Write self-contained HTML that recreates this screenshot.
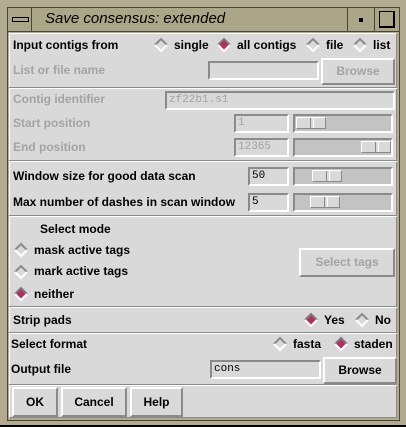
<!DOCTYPE html>
<html><head><style>
*{margin:0;padding:0;box-sizing:border-box}
body{width:406px;height:427px;overflow:hidden;background:#000;font-family:"Liberation Sans",sans-serif;font-weight:bold;font-size:12px;color:#000;position:relative}
.a{position:absolute}
.t{position:absolute;white-space:nowrap;line-height:14px}
.g{color:#a3a3a3}
.sep{position:absolute;left:9px;width:388px;height:2px;border-top:1px solid #8a8a8a;border-bottom:1px solid #fff}
.ent{position:absolute;background:#d9d9d9;border:2px solid;border-color:#8a8a8a #fff #fff #8a8a8a;font-family:"Liberation Mono",monospace;font-weight:normal;font-size:11px;padding-left:2px;line-height:14px}
.btn{position:absolute;background:#d9d9d9;border:2px solid;border-color:#fff #8a8a8a #8a8a8a #fff;text-align:center}
.tr{position:absolute;background:#c3c3c3;border:2px solid;border-color:#8a8a8a #fff #fff #8a8a8a}
.sl{position:absolute;top:1px;height:12px;width:30px;background:#d9d9d9;border:1px solid;border-color:#fff #8a8a8a #8a8a8a #fff}
.sl:after{content:"";position:absolute;left:13px;top:0;width:2px;height:10px;border-left:1px solid #8a8a8a;border-right:1px solid #fff}
</style></head><body>
<div class="a" style="left:0;top:0;width:406px;height:425px;background:#b2ab91"></div>
<div class="a" style="left:7px;top:7px;width:393px;height:414px;border:1px solid #4a4636"></div>
<div class="a" style="left:8px;top:8px;width:391px;height:24px;background:#aca689;border-bottom:1px solid #4a4636"></div>
<div class="a" style="left:31px;top:8px;width:1px;height:24px;background:#4a4636"></div>
<div class="a" style="left:347px;top:8px;width:1px;height:24px;background:#4a4636"></div>
<div class="a" style="left:374px;top:8px;width:1px;height:24px;background:#4a4636"></div>
<div class="a" style="left:12px;top:17px;width:17px;height:5px;border:1px solid #000;background:#aca689"></div>
<div class="a" style="left:359px;top:18px;width:4px;height:4px;background:#000"></div>
<div class="a" style="left:379px;top:11px;width:16px;height:17px;border:1px solid #000;border-right-width:2px;border-bottom-width:2px"></div>
<div class="t" style="left:45px;top:11px;font-weight:normal;font-style:italic;font-size:15px;line-height:16px">Save consensus: extended</div>
<div class="a" style="left:9px;top:33px;width:388px;height:385px;background:#d9d9d9;border:1px solid;border-color:#fff #8a8a8a #8a8a8a #fff"></div>

<svg class="a" style="left:0;top:0" width="406" height="427">
<defs>
<g id="u"><polygon points="0,6 6,0 12,6 6,12" fill="#d9d9d9"/><polyline points="0,6 6,0 12,6" fill="none" stroke="#8a8a8a" stroke-width="2"/><polyline points="0,6 6,12 12,6" fill="none" stroke="#fff" stroke-width="2"/></g>
<g id="s"><polygon points="0,6 6,0 12,6 6,12" fill="#b03060"/><polyline points="0,6 6,0 12,6" fill="none" stroke="#7a7a7a" stroke-width="2"/><polyline points="0,6 6,12 12,6" fill="none" stroke="#fff" stroke-width="2"/></g>
</defs>
<use href="#u" x="155" y="39"/><use href="#s" x="218" y="39"/><use href="#u" x="307" y="39"/><use href="#u" x="354" y="39"/>
<use href="#u" x="15" y="244"/><use href="#u" x="15" y="266"/><use href="#s" x="15" y="288"/>
<use href="#s" x="305" y="314"/><use href="#u" x="356" y="314"/>
<use href="#u" x="274" y="338"/><use href="#s" x="335" y="338"/>
</svg>

<div class="t" style="left:13px;top:38px">Input contigs from</div>
<div class="t" style="left:174px;top:38px">single</div>
<div class="t" style="left:237px;top:38px">all contigs</div>
<div class="t" style="left:326px;top:38px">file</div>
<div class="t" style="left:373px;top:38px">list</div>
<div class="t g" style="left:13px;top:63px">List or file name</div>
<div class="ent" style="left:208px;top:61px;width:111px;height:19px"></div>
<div class="btn g" style="left:321px;top:58px;width:74px;height:27px;line-height:23px">Browse</div>
<div class="sep" style="top:87px"></div>

<div class="t g" style="left:13px;top:92px">Contig identifier</div>
<div class="ent g" style="left:165px;top:91px;width:230px;height:19px;color:#a3a3a3">zf22b1.s1</div>
<div class="t g" style="left:13px;top:116px">Start position</div>
<div class="ent" style="left:234px;top:114px;width:55px;height:19px;color:#a3a3a3">1</div>
<div class="tr" style="left:293px;top:114px;width:100px;height:19px"><div class="sl" style="left:1px"></div></div>
<div class="t g" style="left:13px;top:140px">End position</div>
<div class="ent" style="left:234px;top:138px;width:55px;height:19px;color:#a3a3a3">12365</div>
<div class="tr" style="left:293px;top:138px;width:100px;height:19px"><div class="sl" style="left:66px"></div></div>
<div class="sep" style="top:160px"></div>

<div class="t" style="left:13px;top:169px">Window size for good data scan</div>
<div class="ent" style="left:248px;top:167px;width:41px;height:19px;color:#000">50</div>
<div class="tr" style="left:293px;top:167px;width:100px;height:19px"><div class="sl" style="left:17px"></div></div>
<div class="t" style="left:13px;top:195px">Max number of dashes in scan window</div>
<div class="ent" style="left:248px;top:193px;width:41px;height:19px;color:#000">5</div>
<div class="tr" style="left:293px;top:193px;width:100px;height:19px"><div class="sl" style="left:15px"></div></div>
<div class="sep" style="top:215px"></div>

<div class="t" style="left:40px;top:222px">Select mode</div>
<div class="t" style="left:34px;top:243px">mask active tags</div>
<div class="t" style="left:34px;top:264px">mark active tags</div>
<div class="t" style="left:34px;top:287px">neither</div>
<div class="btn g" style="left:299px;top:248px;width:96px;height:29px;line-height:25px">Select tags</div>
<div class="sep" style="top:306px"></div>

<div class="t" style="left:13px;top:313px">Strip pads</div>
<div class="t" style="left:324px;top:313px">Yes</div>
<div class="t" style="left:375px;top:313px">No</div>
<div class="sep" style="top:332px"></div>

<div class="t" style="left:11px;top:337px">Select format</div>
<div class="t" style="left:293px;top:337px">fasta</div>
<div class="t" style="left:354px;top:337px">staden</div>
<div class="t" style="left:11px;top:362px">Output file</div>
<div class="ent" style="left:210px;top:360px;width:111px;height:19px;color:#000">cons</div>
<div class="btn" style="left:323px;top:357px;width:74px;height:27px;line-height:23px">Browse</div>
<div class="sep" style="top:384px"></div>

<div class="btn" style="left:12px;top:387px;width:46px;height:30px;line-height:26px">OK</div>
<div class="btn" style="left:61px;top:387px;width:66px;height:30px;line-height:26px">Cancel</div>
<div class="btn" style="left:130px;top:387px;width:53px;height:30px;line-height:26px">Help</div>
</body></html>
